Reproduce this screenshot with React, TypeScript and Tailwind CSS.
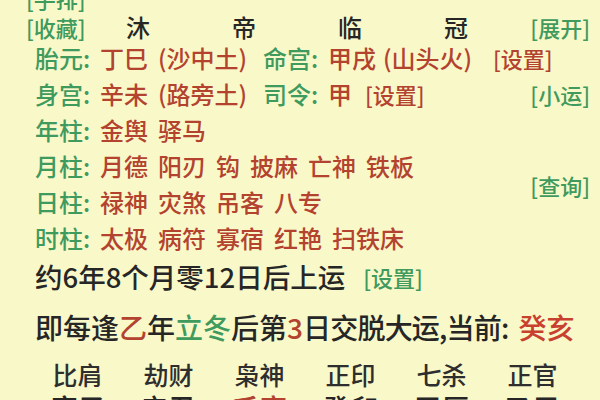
import React from "react";

const G = "text-[#3f9a5e]";
const R = "text-[#b3432f]";
const D = "text-[#262626]";

function LabelRow({ label, words }: { label: string; words: string[] }) {
  return (
    <div className="flex h-[36px] items-center whitespace-nowrap pl-[35px]">
      <span className={`w-[65px] shrink-0 text-[24px] leading-none ${G}`}>{label}</span>
      <div className={`flex gap-[10px] text-[24px] leading-none ${R}`}>
        {words.map((w, i) => (
          <span key={i}>{w}</span>
        ))}
      </div>
    </div>
  );
}

export default function App() {
  const font = { fontFamily: '"Noto Sans CJK SC", "Noto Sans", sans-serif' };
  const gods = ["比肩", "劫财", "枭神", "正印", "七杀", "正官"];
  const bottom: { t: string; c: string }[] = [
    { t: "庚子", c: D },
    { t: "辛丑", c: D },
    { t: "壬寅", c: R },
    { t: "癸卯", c: D },
    { t: "甲辰", c: D },
    { t: "乙巳", c: D },
  ];
  return (
    <div className="h-[400px] w-[600px] overflow-hidden whitespace-nowrap bg-[#f9f8c9] font-medium" style={font}>
      {/* partially cut top row */}
      <div className="-mt-[12px] flex h-[20px] items-center pl-[26px]">
        <span className={`text-[22px] leading-none ${G}`}>[手排]</span>
      </div>
      {/* row 1 */}
      <div className="flex h-[32px] items-center pt-[6px] pl-[26px] pr-[10px]">
        <span className={`w-[59px] shrink-0 text-[22px] leading-none ${G}`}>[收藏]</span>
        {["沐", "帝", "临", "冠"].map((c) => (
          <span key={c} className={`w-[106px] shrink-0 text-center text-[24px] leading-none ${D}`}>
            {c}
          </span>
        ))}
        <span className={`ml-auto text-[22px] leading-none ${G}`}>[展开]</span>
      </div>
      {/* 胎元 */}
      <div className="flex h-[36px] items-center pl-[35px] text-[24px] leading-none">
        <span className={`w-[65px] shrink-0 ${G}`}>胎元:</span>
        <span className={`w-[58px] shrink-0 ${R}`}>丁巳</span>
        <span className={`w-[105px] shrink-0 ${R}`}>(沙中土)</span>
        <span className={`w-[65px] shrink-0 ${G}`}>命宫:</span>
        <span className={`w-[55px] shrink-0 ${R}`}>甲戌</span>
        <span className={`w-[110px] shrink-0 ${R}`}>(山头火)</span>
        <span className={`text-[22px] ${R}`}>[设置]</span>
      </div>
      {/* 身宫 */}
      <div className="flex h-[36px] items-center pl-[35px] pr-[10px] text-[24px] leading-none">
        <span className={`w-[65px] shrink-0 ${G}`}>身宫:</span>
        <span className={`w-[58px] shrink-0 ${R}`}>辛未</span>
        <span className={`w-[105px] shrink-0 ${R}`}>(路旁土)</span>
        <span className={`w-[65px] shrink-0 ${G}`}>司令:</span>
        <span className={`w-[37px] shrink-0 ${R}`}>甲</span>
        <span className={`text-[22px] ${R}`}>[设置]</span>
        <span className={`ml-auto text-[22px] ${G}`}>[小运]</span>
      </div>
      <LabelRow label="年柱:" words={["金舆", "驿马"]} />
      <div className="flex items-center pr-[10px]">
        <div className="flex flex-col">
          <LabelRow label="月柱:" words={["月德", "阳刃", "钩", "披麻", "亡神", "铁板"]} />
          <LabelRow label="日柱:" words={["禄神", "灾煞", "吊客", "八专"]} />
        </div>
        <span className={`ml-auto mt-[2px] text-[22px] leading-none ${G}`}>[查询]</span>
      </div>
      <LabelRow label="时柱:" words={["太极", "病符", "寡宿", "红艳", "扫铁床"]} />
      {/* 上运 */}
      <div className="flex h-[42px] items-center pl-[35px]">
        <span className={`text-[27.5px] leading-none ${D}`}>约6年8个月零12日后上运</span>
        <span className={`ml-[18px] text-[22px] leading-none ${G}`}>[设置]</span>
      </div>
      {/* 大运 */}
      <div className="flex h-[58px] items-center pl-[35px] text-[28px] leading-none">
        <span className={D}>即每逢</span>
        <span className={R}>乙</span>
        <span className={D}>年</span>
        <span className={G}>立冬</span>
        <span className={D}>后第</span>
        <span className={R}>3</span>
        <span className={`tracking-[-0.8px] ${D}`}>日交脱大运,当前:</span>
        <span className={`ml-[10px] text-[#c8402e]`}>癸亥</span>
      </div>
      {/* 十神 */}
      <div className="grid h-[36px] grid-cols-[repeat(6,91px)] items-center pl-[32px]">
        {gods.map((g) => (
          <span key={g} className={`text-center text-[25px] leading-none text-[#2e2e2e]`}>
            {g}
          </span>
        ))}
      </div>
      {/* cut-off bottom row */}
      <div className="mt-[2px] grid grid-cols-[repeat(6,91px)] items-start pl-[32px]">
        {bottom.map((b) => (
          <span key={b.t} className={`text-center text-[28px] leading-none ${b.c}`}>
            {b.t}
          </span>
        ))}
      </div>
    </div>
  );
}
